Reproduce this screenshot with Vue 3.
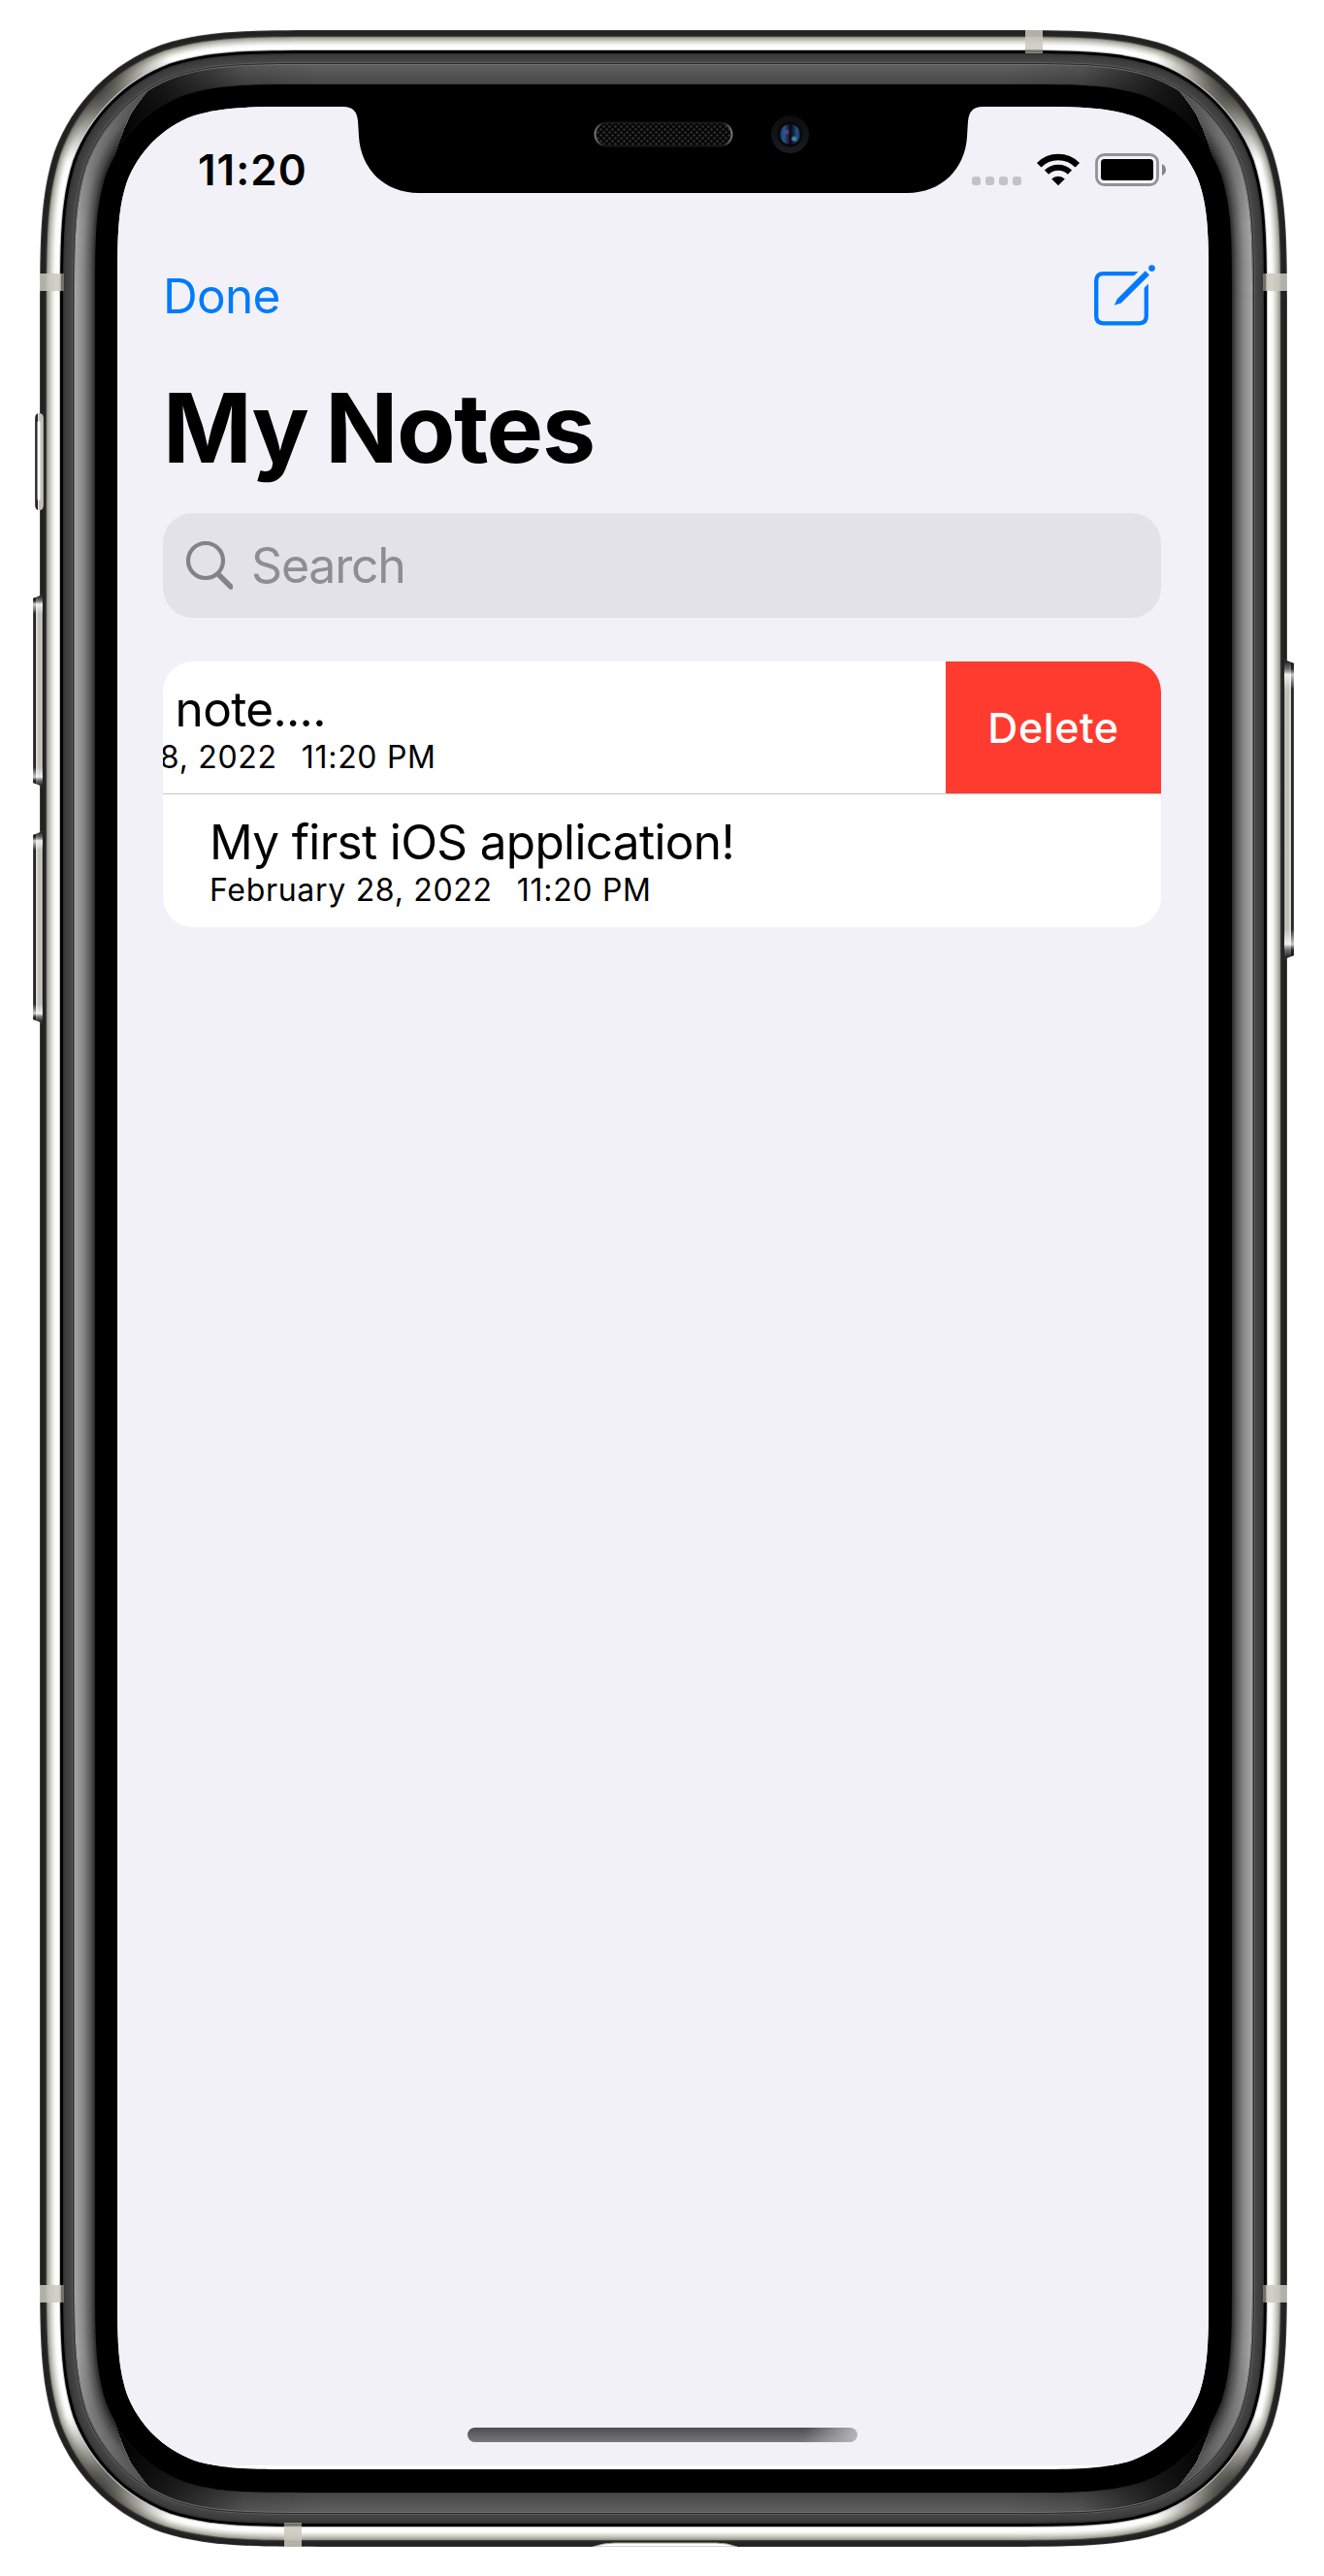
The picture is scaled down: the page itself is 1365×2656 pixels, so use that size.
<script setup>
const BODY = { x: 41, y: 31, w: 1286, h: 2595 }

// Rounded rectangle with continuous-curvature corners
function squircle(x, y, w, h, r) {
  const a = 1.528665 * r
  const b = 1.088493 * r
  const c = 0.868407 * r
  const d = 0.631494 * r
  const e = 0.372824 * r
  const f = 0.16906 * r
  const g = 0.074911 * r
  const R = x + w
  const B = y + h
  return [
    `M${x + a} ${y}H${R - a}`,
    `C${R - b} ${y} ${R - c} ${y} ${R - d} ${y + g}`,
    `C${R - e} ${y + f} ${R - f} ${y + e} ${R - g} ${y + d}`,
    `C${R} ${y + c} ${R} ${y + b} ${R} ${y + a}`,
    `V${B - a}`,
    `C${R} ${B - b} ${R} ${B - c} ${R - g} ${B - d}`,
    `C${R - f} ${B - e} ${R - e} ${B - f} ${R - d} ${B - g}`,
    `C${R - c} ${B} ${R - b} ${B} ${R - a} ${B}`,
    `H${x + a}`,
    `C${x + b} ${B} ${x + c} ${B} ${x + d} ${B - g}`,
    `C${x + e} ${B - f} ${x + f} ${B - e} ${x + g} ${B - d}`,
    `C${x} ${B - c} ${x} ${B - b} ${x} ${B - a}`,
    `V${y + a}`,
    `C${x} ${y + b} ${x} ${y + c} ${x + g} ${y + d}`,
    `C${x + f} ${y + e} ${x + e} ${y + f} ${x + d} ${y + g}`,
    `C${x + c} ${y} ${x + b} ${y} ${x + a} ${y}Z`,
  ].join('')
}

function ring(inset) {
  return squircle(BODY.x + inset, BODY.y + inset, BODY.w - inset * 2, BODY.h - inset * 2, 199 - inset * 0.92)
}

function mix(stops, d) {
  let i = 0
  while (i < stops.length - 2 && d > stops[i + 1][0]) i++
  const [d0, c0] = stops[i]
  const [d1, c1] = stops[i + 1]
  const t = Math.min(1, Math.max(0, (d - d0) / (d1 - d0)))
  return `rgb(${c0.map((v, k) => Math.round(v + (c1[k] - v) * t)).join(',')})`
}

function layers(stops, from, to) {
  const out = []
  for (let d = from; d < to; d++) out.push({ d: ring(d), fill: mix(stops, d) })
  return out
}

const metal = layers([
  [0, [62, 62, 60]], [1, [32, 32, 32]], [5, [38, 38, 38]], [6, [64, 64, 60]], [7, [150, 150, 140]],
  [9, [184, 185, 175]], [12, [222, 222, 217]], [15, [250, 250, 248]], [19, [255, 255, 255]],
  [20, [190, 190, 190]], [21, [0, 0, 0]], [23, [0, 0, 0]], [24, [50, 50, 50]], [26, [60, 60, 60]],
  [32, [70, 70, 70]], [33, [92, 92, 92]], [34, [42, 42, 42]], [35, [110, 110, 110]],
], 0, 36)
const glassTop = layers([[36, [95, 95, 95]], [54, [72, 72, 72]], [55, [62, 62, 62]]], 36, 56)
const glassSide = layers([[36, [164, 164, 164]], [44, [138, 138, 138]], [52, [84, 84, 84]], [56, [45, 45, 45]]], 36, 57)
const silver = ring(6) + ring(20)
const glassRing = ring(36) + ring(56)
const edgeBlack = ring(56)
const display = squircle(121, 110, 1125, 2436, 125)

const notes = [
  { id: 2, title: 'Another note....', date: 'February 28, 2022', time: '11:20 PM', swiped: true },
  { id: 1, title: 'My first iOS application!', date: 'February 28, 2022', time: '11:20 PM', swiped: false },
]
const bands = [
  { x: 41, y: 282, w: 24.5, h: 18 }, { x: 1302.5, y: 282, w: 24.5, h: 18 },
  { x: 41, y: 2356, w: 24.5, h: 18 }, { x: 1302.5, y: 2356, w: 24.5, h: 18 },
  { x: 1057, y: 31, w: 18, h: 24 }, { x: 293, y: 2601, w: 18, h: 25 },
]
const corners = [[98, 88], [1270, 88], [98, 2569], [1270, 2569]]
</script>

<template>
  <main class="stage">
    <svg class="phone" viewBox="0 0 1365 2656" aria-hidden="true">
      <defs>
        <radialGradient id="shade">
          <stop offset="0" stop-color="#34342f" stop-opacity=".95" />
          <stop offset=".25" stop-color="#4c4c45" stop-opacity=".85" />
          <stop offset=".55" stop-color="#66665e" stop-opacity=".55" />
          <stop offset="1" stop-color="#8a8a80" stop-opacity="0" />
        </radialGradient>
        <linearGradient id="fade" gradientUnits="userSpaceOnUse" x1="130" y1="0" x2="1238" y2="0">
          <stop offset="0" stop-color="#000" stop-opacity=".95" />
          <stop offset=".035" stop-color="#000" stop-opacity=".75" />
          <stop offset=".11" stop-color="#000" stop-opacity=".12" />
          <stop offset=".18" stop-color="#000" stop-opacity="0" />
          <stop offset=".82" stop-color="#000" stop-opacity="0" />
          <stop offset=".89" stop-color="#000" stop-opacity=".12" />
          <stop offset=".965" stop-color="#000" stop-opacity=".75" />
          <stop offset="1" stop-color="#000" stop-opacity=".95" />
        </linearGradient>
        <linearGradient id="tips" gradientUnits="userSpaceOnUse" x1="0" y1="83" x2="0" y2="2574">
          <stop offset="0" stop-color="#000" stop-opacity=".6" />
          <stop offset=".02" stop-color="#000" stop-opacity=".3" />
          <stop offset=".06" stop-color="#000" stop-opacity="0" />
          <stop offset=".94" stop-color="#000" stop-opacity="0" />
          <stop offset=".98" stop-color="#000" stop-opacity=".3" />
          <stop offset="1" stop-color="#000" stop-opacity=".6" />
        </linearGradient>
        <linearGradient id="keyL">
          <stop offset="0" stop-color="#555" /><stop offset=".12" stop-color="#2c2c2c" />
          <stop offset=".28" stop-color="#222" /><stop offset=".36" stop-color="#f2f2ee" />
          <stop offset=".5" stop-color="#c4c4bb" /><stop offset=".82" stop-color="#bdbdb4" />
          <stop offset=".9" stop-color="#eeeeea" /><stop offset="1" stop-color="#444" />
        </linearGradient>
        <linearGradient id="keyEnd" x1="0" y1="0" x2="0" y2="1">
          <stop offset="0" stop-color="#111" /><stop offset=".03" stop-color="#222" stop-opacity=".55" />
          <stop offset=".05" stop-color="#fff" stop-opacity=".75" /><stop offset=".1" stop-color="#fff" stop-opacity="0" />
          <stop offset=".9" stop-color="#fff" stop-opacity="0" /><stop offset=".95" stop-color="#fff" stop-opacity=".75" />
          <stop offset=".97" stop-color="#222" stop-opacity=".55" /><stop offset="1" stop-color="#111" />
        </linearGradient>
        <clipPath id="sides">
          <path d="M0 0L163 83Q147 98 135 117Q108 172 108 230V2427Q108 2485 135 2540Q147 2558 163 2574L0 2656ZM1368 0L1205 83Q1221 98 1233 117Q1260 172 1260 230V2427Q1260 2485 1233 2540Q1221 2558 1205 2574L1368 2656Z" />
        </clipPath>
        <clipPath id="displayClip"><path :d="display" /></clipPath>
        <clipPath id="silverClip"><path :d="silver" clip-rule="evenodd" /></clipPath>
        <pattern id="mesh" width="6" height="6" patternUnits="userSpaceOnUse">
          <rect width="6" height="6" fill="#060606" />
          <circle cx="1.5" cy="1.5" r="1.2" fill="#343434" /><circle cx="4.5" cy="4.5" r="1.2" fill="#343434" />
        </pattern>
        <linearGradient id="rim">
          <stop offset="0" stop-color="#777" /><stop offset=".06" stop-color="#171717" />
          <stop offset=".94" stop-color="#171717" /><stop offset="1" stop-color="#777" />
        </linearGradient>
        <linearGradient id="housing" x1="0" y1="0" x2="0" y2="1">
          <stop offset="0" stop-color="#0b0c0e" /><stop offset="1" stop-color="#1b1c1f" />
        </linearGradient>
        <linearGradient id="lens">
          <stop offset="0" stop-color="#12305f" /><stop offset=".2" stop-color="#245a8e" />
          <stop offset=".4" stop-color="#22213f" /><stop offset=".52" stop-color="#05060d" />
          <stop offset=".68" stop-color="#14284c" /><stop offset=".85" stop-color="#255481" /><stop offset="1" stop-color="#0f2248" />
        </linearGradient>
      </defs>

      <g>
        <path v-for="(l, i) in metal" :key="'m' + i" :d="l.d" :fill="l.fill" />
        <g clip-path="url(#silverClip)">
          <circle v-for="(c, i) in corners" :key="'c' + i" :cx="c[0]" :cy="c[1]" r="84" fill="url(#shade)" />
        </g>
        <path v-for="(l, i) in glassTop" :key="'t' + i" :d="l.d" :fill="l.fill" />
        <path :d="glassRing" fill="url(#fade)" fill-rule="evenodd" />
        <path :d="edgeBlack" fill="#000" />
        <g clip-path="url(#sides)">
          <path v-for="(l, i) in glassSide" :key="'s' + i" :d="l.d" :fill="l.fill" />
          <path :d="glassRing" fill="url(#tips)" fill-rule="evenodd" />
        </g>
        <path :d="ring(57)" fill="#000" />
      </g>

      <rect v-for="(b, i) in bands" :key="'b' + i" :x="b.x" :y="b.y" :width="b.w" :height="b.h" fill="#c8c8be" fill-opacity=".86" />
      <path d="M64.500 282v18M1303.500 282v18M64.500 2356v18M1303.500 2356v18" stroke="#707064" stroke-width="3" />
      <path d="M1057 53h18M293 2603h18" stroke="#707064" stroke-width="3" />

      <g>
        <rect x="36" y="420" width="9" height="76" rx="4" transform="translate(0 -126.632) scale(1 1.31579)" fill="url(#keyL)" />
        <rect x="38.500" y="434" width="3" height="82" rx="1.500" fill="#fff" />
        <path d="M34 617L44 613V811L34 807Z" fill="url(#keyL)" />
        <path d="M34 617L44 613V811L34 807Z" fill="url(#keyEnd)" />
        <path d="M34 861L44 857V1055L34 1051Z" fill="url(#keyL)" />
        <path d="M34 861L44 857V1055L34 1051Z" fill="url(#keyEnd)" />
        <g transform="translate(1368 0) scale(-1 1)">
          <path d="M34 684L44 680V989L34 985Z" fill="url(#keyL)" />
          <path d="M34 684L44 680V989L34 985Z" fill="url(#keyEnd)" />
        </g>
        <path d="M611 2626Q622 2622 634 2622H738Q750 2622 760 2626Z" fill="#fff" stroke="#a9a99c" />
        <rect x="605" y="2626" width="160" height="3" fill="#fff" />
      </g>

      <g clip-path="url(#displayClip)">
        <rect x="121" y="110" width="1125" height="2436" fill="#fff" />
        <rect x="121" y="110" width="1125" height="2432" fill="#f2f1f7" />
      </g>
      <path d="M354 109V110Q368 110 369 125Q369.500 132 370 141C372 174 396 199 432 199H935C971 199 995 174 997 141Q997.500 132 998 125Q999 110 1013 110V109Z" fill="#000" />
      <rect x="613.500" y="126.500" width="141" height="24" rx="12" fill="url(#mesh)" stroke="url(#rim)" stroke-width="2" />
      <circle cx="814.500" cy="138.500" r="19.500" fill="url(#housing)" />
      <circle cx="814.500" cy="138.500" r="13" fill="#07080a" />
      <circle cx="814.500" cy="138.500" r="10.500" fill="url(#lens)" />
      <circle cx="811" cy="136" r="2.500" fill="#5d4a94" opacity=".7" />
      <circle cx="818.500" cy="143" r="2.500" fill="#55a2bd" opacity=".7" />
    </svg>

    <section class="screen">
      <header class="status">
        <span class="clock">11:20</span>
        <div class="indicators">
          <div class="dots"><i v-for="n in 4" :key="n" /></div>
          <svg class="wifi" width="46" height="34" viewBox="0 0 46 34">
            <path d="M3.200 12.200A28 28 0 0 1 42.800 12.200" fill="none" stroke="#000" stroke-width="6.300" />
            <path d="M11 19.700A17 17 0 0 1 35 19.700" fill="none" stroke="#000" stroke-width="6" />
            <path d="M23 33.300L16.200 26.600A9.600 9.600 0 0 1 29.800 26.600Z" />
          </svg>
          <svg class="battery" width="74" height="34" viewBox="0 0 74 34">
            <rect x="1.500" y="1.500" width="63" height="31" rx="8" fill="none" stroke="#929196" stroke-width="2.800" />
            <rect x="6" y="6" width="54" height="22" rx="3.500" />
            <path d="M69 11Q73 13 73 17T69 23Z" fill="#858489" />
          </svg>
        </div>
      </header>

      <nav class="bar">
        <a class="done">Done</a>
        <svg class="compose" width="66" height="66" viewBox="0 0 66 66" fill="none" stroke="#007aff" stroke-width="4.300">
          <path d="M48 9.200H11.500Q4.200 9.200 4.200 16.500V53Q4.200 60.300 11.500 60.300H48.500Q55.800 60.300 55.800 53V20" />
          <path d="M41.500 13L51 3.500L62.500 15L53 24.500Z" fill="#f2f1f7" stroke="none" />
          <path d="M22.800 41.800L25.800 35.300L54.800 6.300L59 10.500L29.800 39.500Z" fill="#007aff" stroke="none" />
          <circle cx="61.500" cy="3.600" r="3.300" fill="#007aff" stroke="none" />
        </svg>
      </nav>

      <h1 class="heading">My Notes</h1>

      <div class="search">
        <svg width="48" height="52" viewBox="0 0 48 52" fill="none" stroke="#838287" stroke-linecap="round">
          <circle cx="20" cy="21" r="18" stroke-width="4.200" />
          <path d="M33 35L46 48" stroke-width="5.400" />
        </svg>
        <span>Search</span>
      </div>

      <ul class="notes">
        <li v-for="note in notes" :key="note.id" class="row" :class="{ swiped: note.swiped }">
          <div class="text">
            <div class="title">{{ note.title }}</div>
            <div class="meta"><span>{{ note.date }}</span><span>{{ note.time }}</span></div>
          </div>
          <button v-if="note.swiped" class="delete">Delete</button>
        </li>
      </ul>

      <div class="home" />
    </section>
  </main>
</template>

<style>
body {
  background: #fff;
}
</style>

<style scoped>
.stage {
  position: relative;
  box-sizing: border-box;
  width: 1365px;
  height: 2656px;
  padding: 110px 119px 110px 121px;
  overflow: hidden;
  font-family: Inter, "Liberation Sans", sans-serif;
  color: #000;
}
.phone {
  position: absolute;
  inset: 0;
  width: 1365px;
  height: 2656px;
}
.screen {
  position: relative;
  display: flex;
  flex-direction: column;
  box-sizing: border-box;
  height: 2436px;
  padding: 0 49px 28px 47px;
}
.status {
  display: flex;
  justify-content: space-between;
  height: 132px;
  padding: 48px 0 0 36px;
  box-sizing: border-box;
}
.clock {
  font-size: 44px;
  line-height: 34px;
  font-weight: 600;
  letter-spacing: 1px;
}
.indicators {
  display: flex;
  align-items: flex-start;
  margin-right: -6px;
}
.dots {
  display: flex;
  gap: 5px;
  padding-top: 24px;
  margin-right: 15px;
}
.dots i {
  width: 9px;
  height: 9px;
  border-radius: 3px;
  background: #c3c2c7;
}
.wifi {
  margin-right: 15px;
}
.bar {
  display: flex;
  justify-content: space-between;
  height: 131px;
  padding: 28px 5px 0 0;
  box-sizing: border-box;
}
.compose {
  margin-top: 3px;
  overflow: visible;
}
.done {
  font-size: 49.500px;
  line-height: 70px;
  letter-spacing: -0.7px;
  color: #007aff;
}
.heading {
  margin: 0;
  height: 156px;
  font-size: 98.500px;
  line-height: 138px;
  font-weight: 700;
  letter-spacing: -1.4px;
  word-spacing: -4px;
}
.search {
  display: flex;
  align-items: center;
  flex: none;
  height: 108px;
  padding-left: 24px;
  box-sizing: border-box;
  border-radius: 31px;
  background: #e3e2e8;
  color: #8e8d93;
  font-size: 50px;
  letter-spacing: -1.2px;
}
.search span {
  margin-left: 19px;
}
.notes {
  list-style: none;
  margin: 45px 0 0;
  padding: 0;
  border-radius: 31px;
  background: #fff;
  overflow: hidden;
}
.row {
  display: flex;
  height: 137px;
  box-sizing: border-box;
}
.row:first-child {
  border-bottom: 1px solid #c6c6c8;
}
.text {
  flex: none;
  width: 980px;
  padding: 19px 0 0 48px;
  box-sizing: border-box;
  white-space: nowrap;
}
.swiped .text {
  margin-left: -222px;
  width: 1029px;
}
.title {
  font-size: 49.500px;
  line-height: 61px;
  letter-spacing: -0.67px;
}
.swiped .title {
  margin-left: -8px;
}
.meta {
  display: flex;
  gap: 25px;
  font-size: 32px;
  line-height: 38px;
  letter-spacing: 0.7px;
}
.delete {
  flex: none;
  width: 222px;
  border: 0;
  padding: 0;
  background: #ff3b30;
  color: #fff;
  font: 500 43px Inter, "Liberation Sans", sans-serif;
  letter-spacing: 0.6px;
}
.home {
  width: 402px;
  height: 15px;
  margin: auto auto 0 314px;
  border-radius: 8px;
  background:
    linear-gradient(100deg, transparent 86%, #b8b7bb 100%),
    linear-gradient(#4d4d4f, #79787b);
}
</style>
